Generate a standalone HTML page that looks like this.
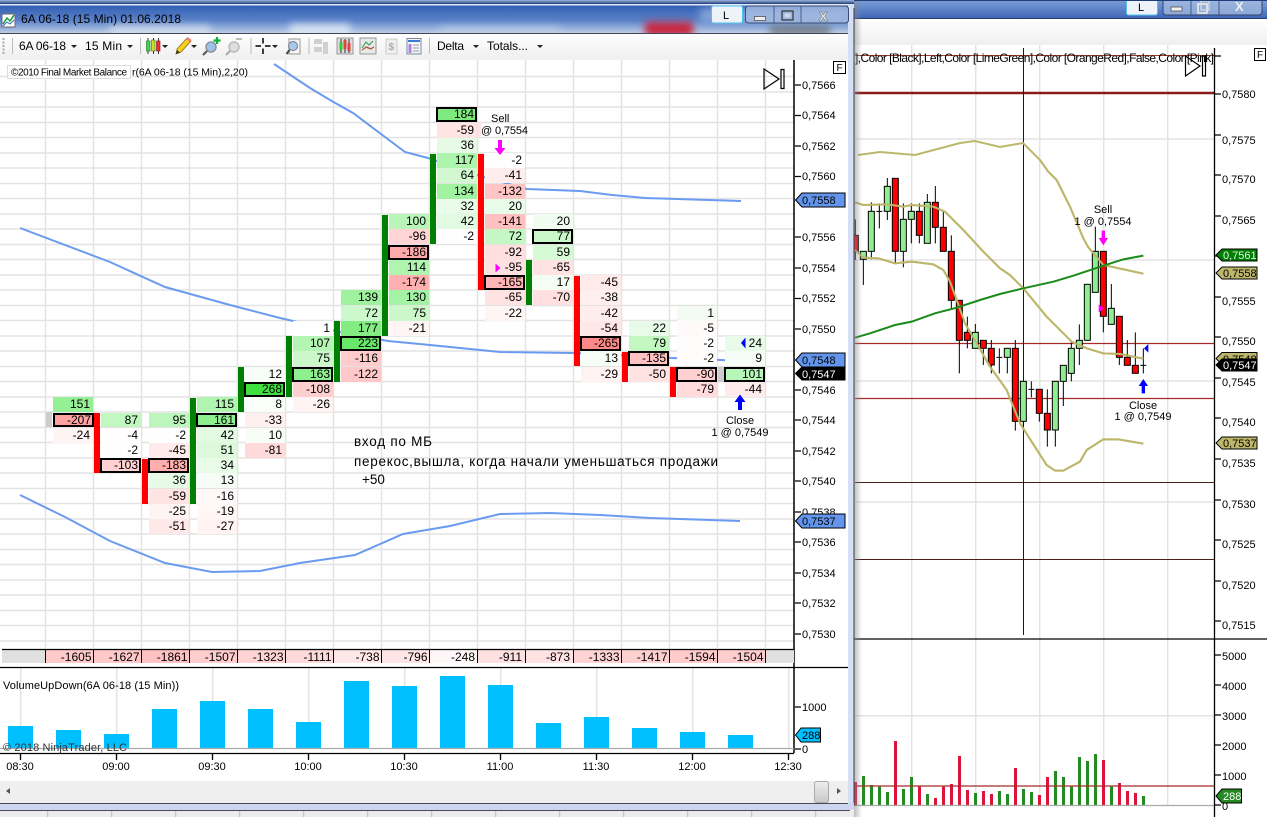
<!DOCTYPE html>
<html><head><meta charset="utf-8"><style>
html,body{margin:0;padding:0;width:1267px;height:817px;overflow:hidden;background:#fff}
#a{position:absolute;left:0;top:0}
#c{position:absolute;left:0;top:0}
#c b{position:absolute;width:40px;height:14.5px;font:12px/15px "Liberation Sans",sans-serif;text-align:right;color:#000;box-sizing:border-box;padding-right:3px}
#c b.x{box-shadow:inset 0 0 0 2px #000;width:41px;padding-right:3px}
#c u{position:absolute;width:6px}
svg text{font-family:"Liberation Sans",sans-serif;font-size:11px;fill:#000}
.g{stroke:#e3e3e3;stroke-width:1.5;fill:none}
.k{stroke:#000;stroke-width:1.3;fill:none}
.t{text-anchor:end;font-size:12px!important}
</style></head><body>
<svg id="a" width="1267" height="817" viewBox="0 0 1267 817">
<defs>
<linearGradient id="tb" x1="0" y1="0" x2="0" y2="1"><stop offset="0" stop-color="#3360b4"/><stop offset=".55" stop-color="#5b82c8"/><stop offset="1" stop-color="#bccde6"/></linearGradient>
<linearGradient id="tr" x1="0" y1="0" x2="0" y2="1"><stop offset="0" stop-color="#7d9fd6"/><stop offset="1" stop-color="#3f67b8"/></linearGradient>
<linearGradient id="tl" x1="0" y1="0" x2="0" y2="1"><stop offset="0" stop-color="#fff"/><stop offset="1" stop-color="#efefef"/></linearGradient>
<linearGradient id="sb" x1="0" y1="0" x2="0" y2="1"><stop offset="0" stop-color="#eee"/><stop offset="1" stop-color="#c8c8c8"/></linearGradient>
<linearGradient id="sh" x1="0" y1="0" x2="1" y2="0"><stop offset="0" stop-color="#888" stop-opacity=".55"/><stop offset="1" stop-color="#888" stop-opacity="0"/></linearGradient>
<linearGradient id="tp" x1="0" y1="0" x2="0" y2="1"><stop offset="0" stop-color="#9fb6dc"/><stop offset="1" stop-color="#1f3d7c"/></linearGradient>
<filter id="bl" x="-30%" y="-100%" width="160%" height="300%"><feGaussianBlur stdDeviation="4"/></filter>
<clipPath id="tc"><rect x="0" y="5" width="854" height="28"/></clipPath>
</defs>
<rect width="1267" height="817" fill="#fff"/>
<!-- right window -->
<rect x="854" y="0" width="413" height="18" fill="url(#tr)"/>
<rect x="854" y="18" width="413" height="1" fill="#2a3d66"/>
<rect x="854" y="19" width="413" height="26" fill="url(#tl)"/>
<g class="g">
<path d="M911.700 45V805M975.700 45V805M1039.700 45V805M1103.700 45V805M1167.700 45V805M855 139H1214M855 260H1214M855 381H1214M855 502H1214M855 715.700H1214"/>
</g>
<path d="M855 55.500H1214" stroke="#a33a2a" stroke-width="1"/>
<text x="855" y="62" style="font-size:12px" textLength="359">],Color [Black],Left,Color [LimeGreen],Color [OrangeRed],False,Color [Pink]</text>
<path d="M855 93H1214" stroke="#8b1a1a" stroke-width="2.500"/>
<path d="M855 343.500H1214M855 398.500H1214" stroke="#a52a2a" stroke-width="1.200"/>
<path d="M855 482.500H1214M855 559.500H1214" stroke="#4a2018" stroke-width="1"/>
<path d="M1023.500 48V635" stroke="#0000dd" stroke-width="1"/>
<path d="M1185.500 56V76L1200 66ZM1202.500 56h3v20h-3Z" fill="none" stroke="#000" stroke-width="1.200"/>
<g transform="translate(850 160) scale(.33333)">
<path fill="none" stroke="#bdb76b" stroke-width="6" d="M15 127L40 135L110 133L160 140L185 135L250 140L285 155L340 210L400 275L450 325L480 345L520 385L590 470L640 520L665 545L710 565L760 580L810 582L880 596"/>
<path fill="none" stroke="#bdb76b" stroke-width="6" d="M15 270L40 293L85 295L135 310L185 305L250 313L280 330L300 365L320 420L345 490L380 550L420 620L470 690L510 790L545 845L590 915L615 932L640 932L690 905L710 870L760 838L805 838L880 851"/>
<path fill="none" stroke="#bdb76b" stroke-width="6" d="M24 -15L90 -24L195 -15L330 -51L375 -57L450 -39L519 -51L570 0L595 35L620 60L660 140L700 235L715 262L760 315L830 330L880 341"/>
<g stroke="#000" stroke-width="3">
<path d="M16 178V300M40 274V375M64 127V298M88 130V205M112 54V180M136 54V310M160 130V322M184 130V250M208 130V250M232 102V250M256 78V250M280 154V275M304 226V445M328 421V640M352 470V565M376 492V565M400 540V615M424 540V640M448 565V640M472 565V640M496 540V812M520 664V812M544 664V712M568 688V785M592 688V860M616 664V860M640 616V738M664 545V664M688 493V615M712 373V541M736 200V397M760 274V517M784 372V493M808 469V615M832 540V615M856 517V640M880 565V640"/>
<path d="M79 154H97M439 592H457M535 688H553M871 616H889"/>
<g fill="#f00">
<rect x="7" y="226" width="18" height="48"/><rect x="127" y="55" width="18" height="219"/><rect x="199" y="154" width="18" height="72"/><rect x="247" y="127" width="18" height="75"/><rect x="271" y="202" width="18" height="72"/><rect x="295" y="274" width="18" height="147"/><rect x="319" y="421" width="18" height="120"/><rect x="343" y="517" width="18" height="24"/><rect x="391" y="541" width="18" height="24"/><rect x="415" y="565" width="18" height="50"/><rect x="487" y="565" width="18" height="219"/><rect x="559" y="688" width="18" height="72"/><rect x="583" y="760" width="18" height="50"/><rect x="751" y="274" width="18" height="195"/><rect x="799" y="469" width="18" height="123"/><rect x="823" y="592" width="18" height="24"/><rect x="847" y="616" width="18" height="24"/>
</g>
<g fill="#90ee90">
<rect x="31" y="274" width="18" height="24"/><rect x="55" y="154" width="18" height="120"/><rect x="103" y="79" width="18" height="75"/><rect x="151" y="178" width="18" height="96"/><rect x="175" y="154" width="18" height="24"/><rect x="223" y="127" width="18" height="123"/><rect x="367" y="517" width="18" height="48"/><rect x="463" y="565" width="18" height="27"/><rect x="511" y="664" width="18" height="120"/><rect x="607" y="664" width="18" height="146"/><rect x="631" y="616" width="18" height="48"/><rect x="655" y="565" width="18" height="75"/><rect x="679" y="541" width="18" height="24"/><rect x="703" y="373" width="18" height="168"/><rect x="727" y="274" width="18" height="123"/><rect x="775" y="445" width="18" height="48"/>
</g>
</g>
<path fill="none" stroke="#bdb76b" stroke-width="6" d="M15 127L40 135L110 133L160 140L185 135L250 140L285 155L340 210L400 275L450 325L480 345L520 385L590 470L640 520L665 545L710 565L760 580L810 582L880 596"/>
<path fill="none" stroke="#bdb76b" stroke-width="6" d="M15 270L40 293L85 295L135 310L185 305L250 313L280 330L300 365L320 420L345 490L380 550L420 620L470 690L510 790L545 845L590 915L615 932L640 932L690 905L710 870L760 838L805 838L880 851"/>
<path fill="none" stroke="#bdb76b" stroke-width="6" d="M570 0L595 35L620 60L660 140L700 235L715 262L760 315L830 330L880 341"/>
<path fill="none" stroke="#1a8a1a" stroke-width="6" d="M15 533L60 520L135 495L185 485L255 460L320 443L390 420L450 402L520 385L610 365L670 347L760 317L820 298L880 287"/>
<path d="M755 212h10v22h9l-14 22l-14-22h9Z" fill="#f0f"/>
<path d="M746 433l16 12l-16 12Z" fill="#f0f"/>
<path d="M875 700v-22h-9l14-21l14 21h-9v22Z" fill="#00f"/>
<path d="M895 552v26l-13-13Z" fill="#00f"/>
</g>
<text x="1103" y="213" text-anchor="middle">Sell</text>
<text x="1103" y="225" text-anchor="middle">1 @ 0,7554</text>
<text x="1143" y="409" text-anchor="middle">Close</text>
<text x="1143" y="420" text-anchor="middle">1 @ 0,7549</text>
<path d="M854 639H1267" stroke="#000" stroke-width="1.300"/>
<g transform="translate(850 630) scale(.33333)">
<g fill="#dc143c"><rect x="12" y="456" width="9" height="69"/><rect x="132" y="333" width="9" height="192"/><rect x="204" y="470" width="9" height="55"/><rect x="252" y="504" width="9" height="21"/><rect x="276" y="470" width="9" height="55"/><rect x="300" y="462" width="9" height="63"/><rect x="324" y="378" width="9" height="147"/><rect x="348" y="480" width="9" height="45"/><rect x="396" y="483" width="9" height="42"/><rect x="420" y="492" width="9" height="33"/><rect x="492" y="414" width="9" height="111"/><rect x="564" y="495" width="9" height="30"/><rect x="588" y="441" width="9" height="84"/><rect x="756" y="390" width="9" height="135"/><rect x="804" y="459" width="9" height="66"/><rect x="828" y="483" width="9" height="42"/><rect x="852" y="489" width="9" height="36"/></g>
<g fill="#228b22"><rect x="36" y="438" width="9" height="87"/><rect x="60" y="465" width="9" height="60"/><rect x="84" y="470" width="9" height="55"/><rect x="108" y="486" width="9" height="39"/><rect x="156" y="477" width="9" height="48"/><rect x="180" y="441" width="9" height="84"/><rect x="228" y="492" width="9" height="33"/><rect x="372" y="489" width="9" height="36"/><rect x="444" y="483" width="9" height="42"/><rect x="468" y="492" width="9" height="33"/><rect x="516" y="477" width="9" height="48"/><rect x="540" y="486" width="9" height="39"/><rect x="612" y="423" width="9" height="102"/><rect x="636" y="441" width="9" height="84"/><rect x="660" y="470" width="9" height="55"/><rect x="684" y="381" width="9" height="144"/><rect x="708" y="393" width="9" height="132"/><rect x="732" y="372" width="9" height="153"/><rect x="780" y="470" width="9" height="55"/><rect x="876" y="498" width="9" height="27"/></g>
</g>
<path d="M854 786H1214" stroke="#a52a2a" stroke-width="1.200"/>
<path d="M854 805.500H1214" stroke="#aaa" stroke-width="1.300"/>
<path d="M1214.500 48V817" stroke="#000" stroke-width="1.300"/>
<path class="k" d="M1215 56h6M1215 94h6M1215 135h6M1215 175h6M1215 216h6M1215 256h6M1215 297h6M1215 337h6M1215 378h6M1215 418h6M1215 459h6M1215 500h6M1215 540h6M1215 581h6M1215 621h6M1215 655h6M1215 685h6M1215 715h6M1215 745h6M1215 775h6M1215 805h6"/>
<g>
<text x="1222" y="98">0,7580</text><text x="1222" y="144">0,7575</text><text x="1222" y="183">0,7570</text><text x="1222" y="224">0,7565</text><text x="1222" y="305">0,7555</text><text x="1222" y="345">0,7550</text><text x="1222" y="386">0,7545</text><text x="1222" y="426">0,7540</text><text x="1222" y="467">0,7535</text><text x="1222" y="508">0,7530</text><text x="1222" y="548">0,7525</text><text x="1222" y="589">0,7520</text><text x="1222" y="629">0,7515</text>
<text x="1222" y="660">5000</text><text x="1222" y="690">4000</text><text x="1222" y="720">3000</text><text x="1222" y="750">2000</text><text x="1222" y="780">1000</text><text x="1222" y="810">0</text>
</g>
<path d="M1216 358.500l6-6h35v12h-35Z" fill="#bdb76b" stroke="#000"/><text x="1223" y="363">0,7548</text>
<path d="M1216 365l6-6h35v12h-35Z" fill="#000" stroke="#000"/><text x="1223" y="369" style="fill:#fff">0,7547</text>
<path d="M1216 255l6-6h35v12h-35Z" fill="#008000" stroke="#000"/><text x="1223" y="259" style="fill:#eee">0,7561</text>
<path d="M1216 273l6-6h35v12h-35Z" fill="#bdb76b" stroke="#000"/><text x="1223" y="277">0,7558</text>
<path d="M1216 443l6-6h35v12h-35Z" fill="#bdb76b" stroke="#000"/><text x="1223" y="447">0,7537</text>
<path d="M1216 796l6-7h19.500v14h-19.500Z" fill="#228b22" stroke="#000"/><text x="1223" y="800" style="fill:#fff">288</text>
<rect x="1254.500" y="48.500" width="11" height="12" fill="#fff" stroke="#000"/><text x="1257" y="58" style="font-size:10px">F</text>
<!-- right window title buttons -->
<rect x="1126.500" y="-3" width="31" height="18" rx="2" fill="#eef3fa" stroke="#4fc3ea"/><text x="1138" y="11">L</text>
<rect x="1163" y="-3" width="99" height="18" rx="3" fill="#a9bfe2" fill-opacity=".7" stroke="#31456f"/>
<path d="M1191 -3v18M1219 -3v18" stroke="#31456f" stroke-width=".8"/>
<rect x="1171" y="7" width="11" height="4" fill="#eee" stroke="#444" stroke-width=".7"/>
<rect x="1198" y="4" width="9" height="9" fill="none" stroke="#eee" stroke-width="1.500"/><rect x="1201" y="1" width="8" height="9" fill="none" stroke="#ddd" stroke-width="1.200"/>
<text x="1235" y="11" style="font-size:13px;font-weight:bold;fill:#eee">X</text>
<!-- window shadow -->
<rect x="854" y="0" width="8" height="817" fill="url(#sh)"/>
<rect x="0" y="811" width="854" height="6" fill="#ececec"/>
<path stroke="#bbb" d="M47.700 811v6M111.700 811v6M175.700 811v6M239.700 811v6M303.700 811v6M367.700 811v6M431.700 811v6M495.700 811v6M559.700 811v6M623.700 811v6M687.700 811v6M751.700 811v6M815.700 811v6"/>
<!-- left window frame -->
<rect x="0" y="0" width="854" height="4" fill="url(#tp)"/>
<rect x="854" y="0" width="413" height="1" fill="#1f3d7c"/>
<rect x="0" y="4" width="852" height="1.500" fill="#dfe8f6"/>
<rect x="0" y="5.500" width="854" height="27.500" fill="url(#tb)"/>
<g clip-path="url(#tc)">
<g filter="url(#bl)">
<rect x="290" y="24" width="60" height="14" fill="#e4ecf6" opacity=".8"/>
<rect x="645" y="22" width="48" height="14" fill="#c8243c"/>
<rect x="770" y="24" width="60" height="12" fill="#5a5a5a" opacity=".6"/>
<rect x="110" y="26" width="100" height="8" fill="#e8eef7" opacity=".7"/>
<rect x="440" y="27" width="120" height="6" fill="#c6d6ea" opacity=".7"/>
<rect x="700" y="8" width="150" height="14" fill="#a9c2e8" opacity=".6"/>
</g>
</g>
<rect x="848" y="4" width="6" height="806" fill="#d6e0f5"/>
<path d="M854 8V806" stroke="#3a3a4a" stroke-width="1"/>
<rect x="0" y="803" width="854" height="7" fill="#cdd6ee"/>
<path d="M0 803.500H848M0 810.500H850" stroke="#4a4a55" stroke-width="1"/>
<rect x="0" y="33" width="848" height="27" fill="url(#tl)"/>
<path d="M0 33.500H848" stroke="#445" stroke-width="1"/>
<!-- title icon + text -->
<rect x="2" y="14" width="13" height="13" fill="#fff" stroke="#667"/>
<path d="M3 24L7 18L10 21L14 15" stroke="#1a9a3a" fill="none" stroke-width="1.500"/><path d="M3 26L7 22L10 24L14 20" stroke="#3466c0" fill="none"/>
<text x="21" y="23" style="font-size:12px" textLength="160">6A 06-18 (15 Min)  01.06.2018</text>
<!-- L + buttons -->
<rect x="711.500" y="6" width="31" height="17" rx="2" fill="#eef3fa" stroke="#4fc3ea"/><text x="723" y="19">L</text>
<rect x="745.500" y="6" width="103" height="17" rx="3" fill="#a9bfe2" fill-opacity=".7" stroke="#3a4c75"/>
<path d="M774 6v17M801 6v17" stroke="#3a4c75" stroke-width=".8"/>
<rect x="754.500" y="16.500" width="11" height="4" fill="#eee" stroke="#444" stroke-width=".7"/>
<rect x="782" y="11" width="11" height="9" fill="none" stroke="#333" stroke-width="1.200"/><rect x="784.500" y="13.500" width="6" height="4" fill="#cfd7e6"/>
<text x="819" y="21" style="font-size:13px;font-weight:bold;fill:#f2f2f2;stroke:#555;stroke-width:.4">X</text>
<!-- toolbar -->
<path d="M3.500 38v16" stroke="#aaa" stroke-width="2" stroke-dasharray="2 1.500"/>
<path d="M12.500 38v16M140.500 38v16M251 38v16M309 38v16M429.500 38v16" stroke="#bbb"/>
<text x="19" y="50" style="font-size:12px" textLength="47">6A 06-18</text>
<text x="85" y="50" style="font-size:12px" textLength="37">15 Min</text>
<text x="437" y="50" style="font-size:12px" textLength="27">Delta</text>
<text x="487" y="50" style="font-size:12px" textLength="41">Totals...</text>
<path d="M71 45h6l-3 3ZM127 45h6l-3 3ZM162 45h6l-3 3ZM191 45h6l-3 3ZM272 45h6l-3 3ZM473 45h6l-3 3ZM537 45h6l-3 3Z" fill="#222"/>
<!-- candle icon -->
<path d="M148 38v16M153.500 38v16M158.500 38v16" stroke="#333"/>
<rect x="146.500" y="41" width="3.500" height="10" fill="#45d545" stroke="#2a7a2a" stroke-width=".7"/><rect x="151.500" y="40" width="3.500" height="11" fill="#c6e030" stroke="#5a7a2a" stroke-width=".7"/><rect x="156.500" y="41" width="3.500" height="10" fill="#e83030" stroke="#8a2a2a" stroke-width=".7"/>
<!-- pencil -->
<path d="M176 54l1-5l10-11l4 3l-10 11Z" fill="#f5d020" stroke="#8a6a10" stroke-width=".8"/><path d="M186 39l4 3l1.500-2l-4-3Z" fill="#e77"/><path d="M176 54l1-4l3 2.500Z" fill="#333"/>
<!-- magnifier + -->
<circle cx="211" cy="47" r="5" fill="#9fc0e8" stroke="#8a94a0" stroke-width="1.500"/><path d="M207 51l-4 4" stroke="#555" stroke-width="2"/><path d="M217 37v7M213.500 40.500h7" stroke="#10b030" stroke-width="2.200"/>
<!-- magnifier grey -->
<circle cx="234" cy="47" r="5" fill="#ddd" stroke="#bbb" stroke-width="1.500"/><path d="M230 51l-4 4" stroke="#aaa" stroke-width="2"/><path d="M236 39h6" stroke="#bbb" stroke-width="2"/>
<!-- crosshair -->
<path d="M263 38v5.500M263 48.500v5.500M255.500 46h5.500M265 46h5.500" stroke="#000" stroke-width="1.500"/>
<!-- doc magnifier -->
<rect x="289" y="39" width="11" height="15" fill="#f4f4f4" stroke="#999"/><circle cx="293" cy="46" r="4.500" fill="#a8c8e8" stroke="#778"/><path d="M289.500 50l-3 4" stroke="#444" stroke-width="2"/>
<!-- grey bars -->
<g fill="#d0d0d0"><rect x="314" y="39" width="8" height="5"/><rect x="314" y="47" width="8" height="5"/><rect x="323" y="42" width="5" height="12"/></g>
<!-- chart candles -->
<rect x="337" y="38" width="16" height="16" fill="#ddd" stroke="#999"/><path d="M341 39v14M345 39v14M349 39v14" stroke="#333"/><rect x="339.500" y="42" width="3" height="8" fill="#3c3"/><rect x="343.500" y="40" width="3" height="9" fill="#d44"/><rect x="347.500" y="43" width="3" height="8" fill="#d44"/>
<rect x="360" y="38" width="16" height="16" fill="#e8e8e8" stroke="#999"/><path d="M362 48l4-6l3 3l4-4M362 50l4-3l4 2l4-2" stroke="#2a9a4a" fill="none"/><path d="M362 50l5-3l4 2l3-2" stroke="#d44" fill="none"/>
<rect x="386" y="39" width="11" height="15" fill="#eee" stroke="#ccc"/><text x="388.500" y="50" style="font-size:10px;font-weight:bold;fill:#aaa">$</text>
<rect x="407" y="38.500" width="14" height="15.500" fill="#f4f6fa" stroke="#7a8a9a"/><rect x="408" y="40" width="12" height="2" fill="#3a7ad0"/><rect x="408.500" y="44" width="3" height="9" fill="#b080e0"/><path d="M413 45h6M413 48h6M413 51h6" stroke="#99a"/>
<!-- chart white -->
<rect x="0" y="60" width="848" height="743" fill="#fff"/>
<g class="g">
<path d="M45.500 60V649M93.500 60V649M141.500 60V649M189.500 60V649M237.500 60V649M285.500 60V649M333.500 60V649M381.500 60V649M429.500 60V649M477.500 60V649M525.500 60V649M573.500 60V649M621.500 60V649M669.500 60V649M717.500 60V649M765.500 60V649"/>
<path d="M0 76.500H794M0 92H794M0 107H794M0 122.500H794M0 137.500H794M0 153H794M0 168H794M0 183.500H794M0 198.500H794M0 214H794M0 229H794M0 244.500H794M0 259.500H794M0 275H794M0 290H794M0 305.500H794M0 320.500H794M0 336H794M0 351H794M0 366.500H794M0 381.500H794M0 397H794M0 412H794M0 427.500H794M0 442.500H794M0 458H794M0 473H794M0 488.500H794M0 503.500H794M0 519H794M0 534H794M0 549.500H794M0 564.500H794M0 580H794M0 595H794M0 610.500H794M0 625.500H794M0 641H794"/>
<path d="M20.700 668V748M116.700 668V748M212.700 668V748M308.700 668V748M404.700 668V748M500.700 668V748M596.700 668V748M692.700 668V748M788.700 668V748"/>
</g>
<g fill="none" stroke="#6b9bf0" stroke-width="2">
<path d="M274 64L310 88L330 100L353 113L405 152L428 158L480 176L527 189L580 191L612 195L645 198L741 201"/>
<path d="M20 228L110 262L165 287L230 305L280 318L293 321L340 332L388 341L430 345L500 352L575 353L673 358L721 360L741 361"/>
<path d="M20 495L65 517L110 541L165 563L212 572L260 571L300 563L355 555L403 534L450 526L500 514L550 513L600 515L650 518L740 521"/>
</g>
</svg>
<div id="c">
<u style="left:46px;top:412px;height:15px;background:#ccc"></u>
<u style="left:718px;top:367px;height:15px;background:#ccc"></u>
<u style="left:94px;top:413px;height:60px;background:#f00"></u>
<u style="left:142px;top:459px;height:45px;background:#f00"></u>
<u style="left:190px;top:398px;height:106px;background:#008000"></u>
<u style="left:238px;top:367px;height:45px;background:#008000"></u>
<u style="left:286px;top:336px;height:61px;background:#008000"></u>
<u style="left:334px;top:321px;height:61px;background:#008000"></u>
<u style="left:382px;top:215px;height:121px;background:#008000"></u>
<u style="left:430px;top:154px;height:90px;background:#008000"></u>
<u style="left:478px;top:154px;height:136px;background:#f00"></u>
<u style="left:526px;top:260px;height:45px;background:#008000"></u>
<u style="left:574px;top:276px;height:90px;background:#f00"></u>
<u style="left:622px;top:352px;height:30px;background:#f00"></u>
<u style="left:670px;top:367px;height:30px;background:#f00"></u>
<b style="left:53px;top:397px;background:#95f095">151</b><b class="x" style="left:53px;top:412.500px;background:#ffa2a2">-207</b><b style="left:53px;top:428px;background:#fff4f4">-24</b>
<b style="left:101px;top:412.500px;background:#c2f7c2">87</b><b style="left:101px;top:428px;background:#fffdfd">-4</b><b style="left:101px;top:443px;background:#fffefe">-2</b><b class="x" style="left:100px;top:458px;background:#ffd1d1">-103</b>
<b style="left:149px;top:412.500px;background:#bdf6bd">95</b><b style="left:149px;top:428px;background:#fffefe">-2</b><b style="left:149px;top:443px;background:#ffebeb">-45</b><b class="x" style="left:148px;top:458px;background:#ffadad">-183</b><b style="left:149px;top:473px;background:#e6fae6">36</b><b style="left:149px;top:489px;background:#ffe4e4">-59</b><b style="left:149px;top:504px;background:#fff4f4">-25</b><b style="left:149px;top:519px;background:#ffe8e8">-51</b>
<b style="left:197px;top:397px;background:#aff4af">115</b><b class="x" style="left:196px;top:412.500px;background:#8eef8e">161</b><b style="left:197px;top:428px;background:#e2fae2">42</b><b style="left:197px;top:443px;background:#dcf9dc">51</b><b style="left:197px;top:458px;background:#e7fbe7">34</b><b style="left:197px;top:473px;background:#f6fdf6">13</b><b style="left:197px;top:489px;background:#fff8f8">-16</b><b style="left:197px;top:504px;background:#fff6f6">-19</b><b style="left:197px;top:519px;background:#fff3f3">-27</b>
<b style="left:245px;top:367px;background:#f7fdf7">12</b><b class="x" style="left:244px;top:382px;background:#40e040">268</b><b style="left:245px;top:397px;background:#f9fef9">8</b><b style="left:245px;top:412.500px;background:#fff0f0">-33</b><b style="left:245px;top:428px;background:#f8fdf8">10</b><b style="left:245px;top:443px;background:#ffdada">-81</b>
<b style="left:293px;top:321px;background:#fefffe">1</b><b style="left:293px;top:336px;background:#b4f5b4">107</b><b style="left:293px;top:351px;background:#cbf7cb">75</b><b class="x" style="left:292px;top:367px;background:#8def8d">163</b><b style="left:293px;top:382px;background:#ffcece">-108</b><b style="left:293px;top:397px;background:#fff3f3">-26</b>
<b style="left:341px;top:290px;background:#9ef29e">139</b><b style="left:341px;top:306px;background:#cdf8cd">72</b><b style="left:341px;top:321px;background:#83ec83">177</b><b class="x" style="left:340px;top:336px;background:#68e868">223</b><b style="left:341px;top:351px;background:#ffcbcb">-116</b><b style="left:341px;top:367px;background:#ffc8c8">-122</b>
<b style="left:389px;top:214px;background:#b9f5b9">100</b><b style="left:389px;top:229px;background:#ffd4d4">-96</b><b class="x" style="left:388px;top:245px;background:#ffabab">-186</b><b style="left:389px;top:260px;background:#aff4af">114</b><b style="left:389px;top:275px;background:#ffb1b1">-174</b><b style="left:389px;top:290px;background:#a4f3a4">130</b><b style="left:389px;top:306px;background:#cbf7cb">75</b><b style="left:389px;top:321px;background:#fff5f5">-21</b>
<b class="x" style="left:436px;top:107.300px;background:#7ee97e">184</b><b style="left:437px;top:123px;background:#ffe4e4">-59</b><b style="left:437px;top:138px;background:#e6fae6">36</b><b style="left:437px;top:153px;background:#adf4ad">117</b><b style="left:437px;top:168px;background:#d2f8d2">64</b><b style="left:437px;top:184px;background:#a1f3a1">134</b><b style="left:437px;top:199px;background:#e9fbe9">32</b><b style="left:437px;top:214px;background:#e2fae2">42</b><b style="left:437px;top:229px;background:#fffefe">-2</b>
<b style="left:485px;top:153px;background:#fffefe">-2</b><b style="left:485px;top:168px;background:#ffeded">-41</b><b style="left:485px;top:184px;background:#ffc4c4">-132</b><b style="left:485px;top:199px;background:#e8fae8">20</b><b style="left:485px;top:214px;background:#ffc0c0">-141</b><b style="left:485px;top:229px;background:#c4f7c4">72</b><b style="left:485px;top:245px;background:#ffdede">-92</b><b style="left:485px;top:260px;background:#ffe0e0">-95</b><b class="x" style="left:484px;top:275px;background:#ffb5b5">-165</b><b style="left:485px;top:290px;background:#ffe2e2">-65</b><b style="left:485px;top:306px;background:#fff5f5">-22</b>
<b style="left:533px;top:214px;background:#f1fcf1">20</b><b class="x" style="left:532px;top:229px;background:#c9f7c9">77</b><b style="left:533px;top:245px;background:#d6f9d6">59</b><b style="left:533px;top:260px;background:#ffe2e2">-65</b><b style="left:533px;top:275px;background:#f3fdf3">17</b><b style="left:533px;top:290px;background:#ffdfdf">-70</b>
<b style="left:581px;top:275px;background:#ffe9e9">-45</b><b style="left:581px;top:290px;background:#ffeeee">-38</b><b style="left:581px;top:306px;background:#ffecec">-42</b><b style="left:581px;top:321px;background:#ffe7e7">-54</b><b class="x" style="left:580px;top:336px;background:#ff8888">-265</b><b style="left:581px;top:351px;background:#f6fdf6">13</b><b style="left:581px;top:367px;background:#fff2f2">-29</b>
<b style="left:629px;top:321px;background:#e8fbe8">22</b><b style="left:629px;top:336px;background:#c2f7c2">79</b><b class="x" style="left:628px;top:351px;background:#ffc2c2">-135</b><b style="left:629px;top:367px;background:#ffe2e2">-50</b>
<b style="left:677px;top:306px;background:#f4fbf4">1</b><b style="left:677px;top:321px;background:#fffafa">-5</b><b style="left:677px;top:336px;background:#fffcfc">-2</b><b style="left:677px;top:351px;background:#fffcfc">-2</b><b class="x" style="left:676px;top:367px;background:#ffd0d0">-90</b><b style="left:677px;top:382px;background:#ffdbdb">-79</b>
<b style="left:725px;top:336px;background:#e8fbe8">24</b><b style="left:725px;top:351px;background:#f6fdf6">9</b><b class="x" style="left:724px;top:367px;background:#b8f5b8">101</b><b style="left:725px;top:382px;background:#ffebeb">-44</b>
</div>
<svg id="o" style="position:absolute;left:0;top:0" width="1267" height="817" viewBox="0 0 1267 817">
<!-- labels -->
<rect x="7.500" y="65.500" width="123" height="13" fill="#fff" stroke="#ddd"/>
<text x="11" y="75.500" style="font-size:10px" textLength="116">©2010 Final Market Balance</text>
<text x="132" y="75.500" style="font-size:10.500px" textLength="116">r(6A 06-18 (15 Min),2,20)</text>
<path d="M764 69V89L779 79ZM781 69.500h3v19h-3Z" fill="none" stroke="#000" stroke-width="1.200"/>
<rect x="833.500" y="61.500" width="12" height="12" fill="#fff" stroke="#000"/><text x="836.500" y="71" style="font-size:10px">F</text>
<text x="491" y="122">Sell</text>
<rect x="478" y="122" width="3" height="15" fill="#ffe4e4"/>
<text x="481" y="134" textLength="47">@ 0,7554</text>
<path d="M498 140h4v8h3.500l-5.500 7l-5.500-7h3.500Z" fill="#f0f"/>
<path d="M495.500 263.500l5 4.500l-5 4.500Z" fill="#f0f"/>
<path d="M743 409v-8h3.500l-5.500-7.500l-5.500 7.500h3.500v8Z" transform="translate(-1 1)" fill="#00f"/>
<path d="M745.500 337.500v11l-4.500-5.500Z" fill="#00f"/>
<text x="740" y="424" text-anchor="middle">Close</text>
<text x="740" y="436" text-anchor="middle">1 @ 0,7549</text>
<text x="354" y="446" style="font-size:13.500px" textLength="78">вход по МБ</text>
<text x="354" y="466" style="font-size:13.500px" textLength="364">перекос,вышла, когда начали уменьшаться продажи</text>
<text x="362" y="484" style="font-size:13.500px">+50</text>
<!-- axis -->
<path d="M794 60V753" stroke="#000" stroke-width="1.500"/>
<path class="k" d="M795 85h6M795 115.500h6M795 146h6M795 176.500h6M795 237h6M795 268h6M795 298.500h6M795 329h6M795 390h6M795 420h6M795 451h6M795 481h6M795 512h6M795 542h6M795 573h6M795 603h6M795 634h6M795 707h6M795 749h6"/>
<text x="802" y="89">0,7566</text><text x="802" y="119">0,7564</text><text x="802" y="150">0,7562</text><text x="802" y="180">0,7560</text><text x="802" y="241">0,7556</text><text x="802" y="272">0,7554</text><text x="802" y="302">0,7552</text><text x="802" y="333">0,7550</text><text x="802" y="394">0,7546</text><text x="802" y="424">0,7544</text><text x="802" y="455">0,7542</text><text x="802" y="485">0,7540</text><text x="802" y="516">0,7538</text><text x="802" y="546">0,7536</text><text x="802" y="577">0,7534</text><text x="802" y="607">0,7532</text><text x="802" y="638">0,7530</text>
<path d="M795.500 200l6.500-7h43v14h-43Z" fill="#6495ed" stroke="#000"/><text x="802" y="204">0,7558</text>
<path d="M795.500 360l6.500-7h43v14h-43Z" fill="#6495ed" stroke="#000"/><text x="802" y="364">0,7548</text>
<path d="M795.500 373.500l6.500-6.500h43v13h-43Z" fill="#000" stroke="#000"/><text x="802" y="378" style="fill:#fff">0,7547</text>
<path d="M795.500 521l6.500-7h43v14h-43Z" fill="#6495ed" stroke="#000"/><text x="802" y="525">0,7537</text>
<!-- totals -->
<rect x="2" y="650" width="44" height="13" fill="#e0e0e0"/><rect x="766" y="650" width="28" height="13" fill="#e0e0e0"/>
<g>
<rect x="46" y="650" width="48" height="13" fill="#ffcaca"/><rect x="94" y="650" width="48" height="13" fill="#ffc9c9"/><rect x="142" y="650" width="48" height="13" fill="#ffc1c1"/><rect x="190" y="650" width="48" height="13" fill="#ffcdcd"/><rect x="238" y="650" width="48" height="13" fill="#ffd3d3"/><rect x="286" y="650" width="48" height="13" fill="#ffdada"/><rect x="334" y="650" width="48" height="13" fill="#ffe7e7"/><rect x="382" y="650" width="48" height="13" fill="#ffe5e5"/><rect x="430" y="650" width="48" height="13" fill="#fff7f7"/><rect x="478" y="650" width="48" height="13" fill="#ffe0e0"/><rect x="526" y="650" width="48" height="13" fill="#ffe2e2"/><rect x="574" y="650" width="48" height="13" fill="#ffd3d3"/><rect x="622" y="650" width="48" height="13" fill="#ffd0d0"/><rect x="670" y="650" width="48" height="13" fill="#ffcbcb"/><rect x="718" y="650" width="48" height="13" fill="#ffcdcd"/>
</g>
<path d="M2 649.500H794M0 667.500H848" stroke="#000" stroke-width="1.200"/>
<path stroke="#000" d="M45.500 650v13M93.500 650v13M141.500 650v13M189.500 650v13M237.500 650v13M285.500 650v13M333.500 650v13M381.500 650v13M429.500 650v13M477.500 650v13M525.500 650v13M573.500 650v13M621.500 650v13M669.500 650v13M717.500 650v13M765.500 650v13"/>
<g class="t" style="text-anchor:end">
<text x="91.500" y="661" class="t">-1605</text><text x="139.500" y="661" class="t">-1627</text><text x="187.500" y="661" class="t">-1861</text><text x="235.500" y="661" class="t">-1507</text><text x="283.500" y="661" class="t">-1323</text><text x="331.500" y="661" class="t">-1111</text><text x="379.500" y="661" class="t">-738</text><text x="427.500" y="661" class="t">-796</text><text x="475" y="661" class="t">-248</text><text x="522" y="661" class="t">-911</text><text x="570" y="661" class="t">-873</text><text x="619.500" y="661" class="t">-1333</text><text x="667.500" y="661" class="t">-1417</text><text x="715.500" y="661" class="t">-1594</text><text x="763.500" y="661" class="t">-1504</text>
</g>
<!-- volume -->
<g fill="#00bfff">
<rect x="8" y="726" width="25" height="22"/><rect x="56" y="730" width="25" height="18"/><rect x="104" y="734" width="25" height="14"/><rect x="152" y="709" width="25" height="39"/><rect x="200" y="701" width="25" height="47"/><rect x="248" y="709" width="25" height="39"/><rect x="296" y="722" width="25" height="26"/><rect x="344" y="681" width="25" height="67"/><rect x="392" y="686" width="25" height="62"/><rect x="440" y="676" width="25" height="72"/><rect x="488" y="685" width="25" height="63"/><rect x="536" y="723" width="25" height="25"/><rect x="584" y="717" width="25" height="31"/><rect x="632" y="728" width="25" height="20"/><rect x="680" y="732" width="25" height="16"/><rect x="728" y="735" width="25" height="13"/>
</g>
<path d="M0 748.500H794" stroke="#aaa" stroke-width="1.300"/>
<path d="M0 753.500H794" stroke="#000" stroke-width="1.300"/>
<text x="3" y="689" textLength="176">VolumeUpDown(6A 06-18 (15 Min))</text>
<text x="3" y="751" textLength="124" style="fill:#333">© 2018 NinjaTrader, LLC</text>
<text x="802" y="711">1000</text><text x="802" y="753">0</text>
<path d="M795.500 735l5.500-7h19.500v14h-19.500Z" fill="#00bfff" stroke="#000"/><text x="802" y="739">288</text>
<path class="k" d="M20.500 754v6M116.500 754v6M212.500 754v6M308.500 754v6M404.500 754v6M500.500 754v6M596.500 754v6M692.500 754v6M788.500 754v6"/>
<text x="20" y="770" text-anchor="middle">08:30</text><text x="116" y="770" text-anchor="middle">09:00</text><text x="212" y="770" text-anchor="middle">09:30</text><text x="308" y="770" text-anchor="middle">10:00</text><text x="404" y="770" text-anchor="middle">10:30</text><text x="500" y="770" text-anchor="middle">11:00</text><text x="596" y="770" text-anchor="middle">11:30</text><text x="692" y="770" text-anchor="middle">12:00</text><text x="788" y="770" text-anchor="middle">12:30</text>
<!-- scrollbar -->
<rect x="0" y="781" width="848" height="22" fill="#efefef"/>
<path d="M10 788v6l-4-3Z" fill="#555"/>
<path d="M837 788v6l4-3Z" fill="#555"/>
<rect x="814.500" y="781.500" width="14" height="21" rx="2" fill="url(#sb)" stroke="#aaa"/>
</svg>
</body></html>
